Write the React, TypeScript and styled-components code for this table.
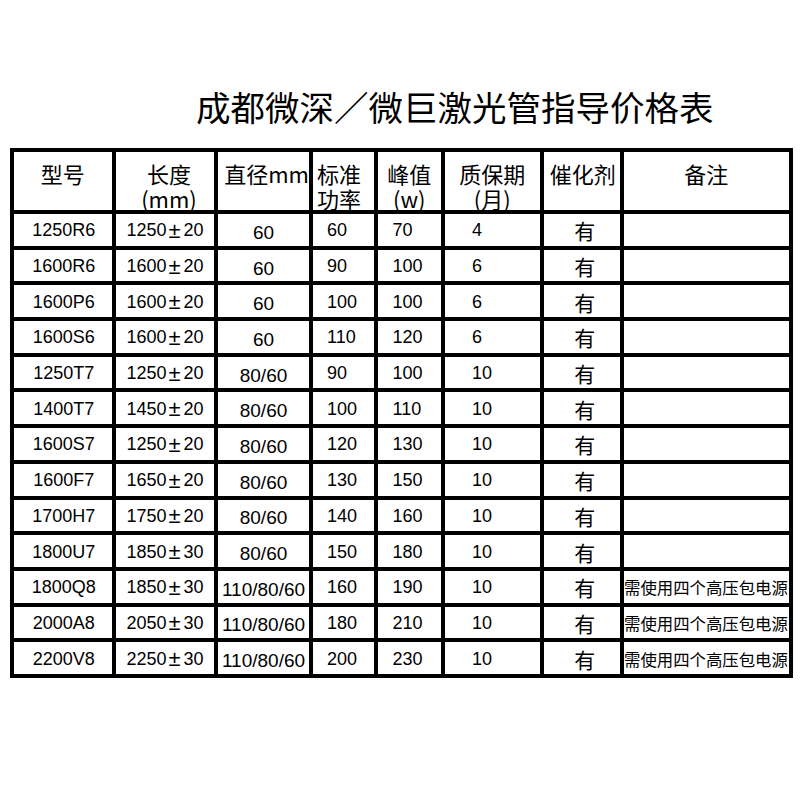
import styled, { createGlobalStyle } from 'styled-components';

const GlobalStyle = createGlobalStyle`
  body {
    margin: 0;
    background: #fff;
  }
`;

const Page = styled.div`
  padding: 86px 0 0 9.5px;
  font-family: 'Liberation Sans', 'Noto Sans CJK SC', sans-serif;
  color: #000;
`;

const Title = styled.h1`
  margin: 0 0 22px 0;
  padding-left: 186.5px;
  font-family: 'Noto Sans CJK SC', sans-serif;
  font-weight: 400;
  font-size: 34.5px;
  line-height: 40px;
  white-space: nowrap;
`;

const colWidths = [98.5, 98, 91, 60.5, 63.5, 94.5, 76.5, 164.5];

const Grid = styled.div`
  display: grid;
  width: fit-content;
  grid-template-columns: ${colWidths.map((w) => `${w}px`).join(' ')};
  grid-template-rows: 58px repeat(13, 31.7px);
  gap: 4px;
  padding: 4px;
  background: #000;
`;

type Align = 'center' | 'left';

const HeadCell = styled.div<{ $align: Align; $pad: number }>`
  background: #fff;
  padding: 9px 0 0 ${(p) => p.$pad}px;
  font-family: 'Noto Sans CJK SC', sans-serif;
  font-size: 22px;
  line-height: 25px;
  text-align: ${(p) => p.$align};
  white-space: pre;
`;

const Cell = styled.div<{ $align: Align; $pad: number; $size: number; $top: number; $cjk?: boolean }>`
  background: #fff;
  display: flex;
  align-items: center;
  justify-content: ${(p) => (p.$align === 'center' ? 'center' : 'flex-start')};
  padding: ${(p) => p.$top}px 0 0 ${(p) => p.$pad}px;
  font-family: ${(p) =>
    p.$cjk ? "'Noto Sans CJK SC', sans-serif" : "'Liberation Sans', 'Noto Sans CJK SC', sans-serif"};
  font-size: ${(p) => p.$size}px;
  white-space: nowrap;
  overflow: visible;
`;

const PlusMinus = styled.span`
  margin: 0 3px 0 2px;
  font-size: 22px;
  line-height: 1;
`;

const headers: { text: string; align: Align; pad: number }[] = [
  { text: '型号', align: 'center', pad: 0 },
  { text: '长度\n(mm)', align: 'center', pad: 8 },
  { text: '直径mm', align: 'center', pad: 6 },
  { text: '标准\n功率', align: 'left', pad: 4 },
  { text: '峰值\n(w)', align: 'center', pad: 0 },
  { text: '质保期\n(月)', align: 'center', pad: 0 },
  { text: '催化剂', align: 'center', pad: 2 },
  { text: '备注', align: 'center', pad: 0 },
];

const bodyCols: { align: Align; pad: number; size: number; top: number; cjk?: boolean }[] = [
  { align: 'center', pad: 2, size: 18, top: 2 },
  { align: 'center', pad: 0, size: 18, top: 2 },
  { align: 'center', pad: 0, size: 19, top: 6 },
  { align: 'left', pad: 14, size: 18, top: 2 },
  { align: 'left', pad: 15, size: 18, top: 2 },
  { align: 'left', pad: 27, size: 18, top: 2 },
  { align: 'center', pad: 6, size: 21, top: 1, cjk: true },
  { align: 'left', pad: 0, size: 16.4, top: 1, cjk: true },
];

const note = '需使用四个高压包电源';

const rows: string[][] = [
  ['1250R6', '1250±20', '60', '60', '70', '4', '有', ''],
  ['1600R6', '1600±20', '60', '90', '100', '6', '有', ''],
  ['1600P6', '1600±20', '60', '100', '100', '6', '有', ''],
  ['1600S6', '1600±20', '60', '110', '120', '6', '有', ''],
  ['1250T7', '1250±20', '80/60', '90', '100', '10', '有', ''],
  ['1400T7', '1450±20', '80/60', '100', '110', '10', '有', ''],
  ['1600S7', '1250±20', '80/60', '120', '130', '10', '有', ''],
  ['1600F7', '1650±20', '80/60', '130', '150', '10', '有', ''],
  ['1700H7', '1750±20', '80/60', '140', '160', '10', '有', ''],
  ['1800U7', '1850±30', '80/60', '150', '180', '10', '有', ''],
  ['1800Q8', '1850±30', '110/80/60', '160', '190', '10', '有', note],
  ['2000A8', '2050±30', '110/80/60', '180', '210', '10', '有', note],
  ['2200V8', '2250±30', '110/80/60', '200', '230', '10', '有', note],
];

const renderValue = (value: string) => {
  if (!value.includes('±')) return value;
  const [len, tol] = value.split('±');
  return (
    <>
      {len}
      <PlusMinus>±</PlusMinus>
      {tol}
    </>
  );
};

const App = () => {
  return (
    <Page>
      <GlobalStyle />
      <Title>成都微深／微巨激光管指导价格表</Title>
      <Grid>
        {headers.map((h) => (
          <HeadCell key={h.text} $align={h.align} $pad={h.pad}>
            {h.text}
          </HeadCell>
        ))}
        {rows.map((row) =>
          row.map((value, i) => {
            const c = bodyCols[i];
            return (
              <Cell
                key={`${row[0]}-${i}`}
                $align={c.align}
                $pad={c.pad}
                $size={c.size}
                $top={c.top}
                $cjk={c.cjk}
              >
                {renderValue(value)}
              </Cell>
            );
          })
        )}
      </Grid>
    </Page>
  );
};

export default App;
